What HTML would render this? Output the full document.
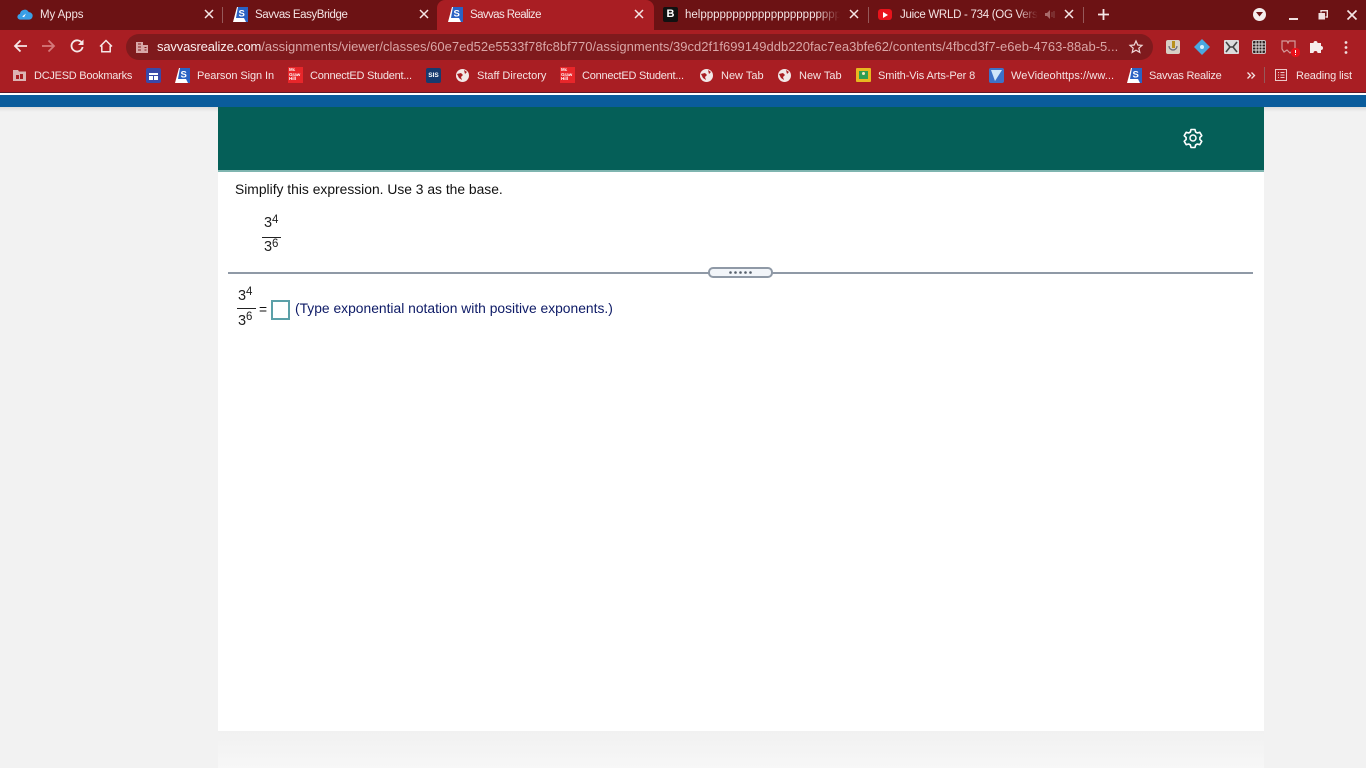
<!DOCTYPE html>
<html><head><meta charset="utf-8"><title>Savvas Realize</title>
<style>
*{box-sizing:border-box}
html,body{margin:0;padding:0;width:1366px;height:768px;overflow:hidden;background:#f2f2f2;font-family:"Liberation Sans",sans-serif}
.a{position:absolute}
.t{position:absolute;white-space:nowrap;color:#f4e4e4;font-size:11.5px;line-height:14px}
.b{position:absolute;white-space:nowrap;color:#f4e4e4;font-size:11px;line-height:14px;top:69px}
svg{position:absolute;overflow:visible}
.m{position:absolute;white-space:nowrap;color:#111;font-size:13.85px;line-height:17px}
.n{position:absolute;white-space:nowrap;color:#222;font-size:14.5px;line-height:17px}
.s{position:absolute;white-space:nowrap;color:#222;font-size:11.5px;line-height:12px}
.mh{position:absolute;width:15px;height:16px;background:#e8262a;overflow:hidden;color:#fff;font:700 4.500px/4.700px "Liberation Sans",sans-serif;padding:1px 0 0 1px}
</style></head><body>
<div class="a" style="left:0;top:0;width:1366px;height:30px;background:#6c1214"></div>
<div class="a" style="left:0;top:30px;width:1366px;height:62px;background:#a91e23"></div>
<div class="a" style="left:0;top:92px;width:1366px;height:1px;background:#5b1a2a"></div>
<div class="a" style="left:0;top:93px;width:1366px;height:2px;background:#fff"></div>
<div class="a" style="left:0;top:95px;width:1366px;height:12px;background:#0a5c9c"></div>
<div class="a" style="left:0;top:107px;width:1366px;height:5px;background:linear-gradient(#dcdcdc,#f2f2f2)"></div>
<div class="a" style="left:437px;top:0;width:217px;height:30px;background:#a91e23;border-radius:8px 8px 0 0"></div>
<div class="a" style="left:222px;top:7px;width:1px;height:16px;background:#96595a"></div>
<div class="a" style="left:868px;top:7px;width:1px;height:16px;background:#96595a"></div>
<div class="a" style="left:1083px;top:7px;width:1px;height:16px;background:#96595a"></div>

<svg style="left:17px;top:8px" width="16" height="13" viewBox="0 0 16 14"><path d="M3 12.500a3 3 0 0 1-.4-6A5 5 0 0 1 12 4.500a4 4 0 0 1 .5 8z" fill="#3a9fe6"/><path d="M5 9l4-3-2 4z" fill="#fff"/></svg>
<span class="t" style="left:40px;top:8px;letter-spacing:-.1px">My Apps</span>
<svg style="left:204px;top:9px" width="10" height="10"><path d="M1 1l8 8M9 1l-8 8" stroke="#f5e6e6" stroke-width="1.500"/></svg>

<svg style="left:233px;top:7px" width="15" height="15" viewBox="0 0 15 15"><path d="M4 0h11v15H0z" fill="#fff"/><path d="M5 0h10v15h-2L11 11H3z" fill="#2a62c4"/><text x="5.500" y="9.500" font-size="9.500" font-weight="700" fill="#fff" font-family="Liberation Sans">S</text></svg>
<span class="t" style="left:255px;top:8px;letter-spacing:-.43px">Savvas EasyBridge</span>
<svg style="left:419px;top:9px" width="10" height="10"><path d="M1 1l8 8M9 1l-8 8" stroke="#f5e6e6" stroke-width="1.500"/></svg>

<svg style="left:448px;top:7px" width="15" height="15" viewBox="0 0 15 15"><path d="M4 0h11v15H0z" fill="#fff"/><path d="M5 0h10v15h-2L11 11H3z" fill="#2a62c4"/><text x="5.500" y="9.500" font-size="9.500" font-weight="700" fill="#fff" font-family="Liberation Sans">S</text></svg>
<span class="t" style="left:470px;top:8px;letter-spacing:-.6px">Savvas Realize</span>
<svg style="left:634px;top:9px" width="10" height="10"><path d="M1 1l8 8M9 1l-8 8" stroke="#f5e6e6" stroke-width="1.500"/></svg>

<div class="a" style="left:663px;top:7px;width:15px;height:15px;background:#111;border-radius:2px;color:#fff;font:700 11px/15px 'Liberation Sans',sans-serif;text-align:center">B</div>
<span class="t" style="left:685px;top:8px;width:155px;overflow:hidden;-webkit-mask-image:linear-gradient(90deg,#000 85%,transparent)">helppppppppppppppppppppppppp</span>
<svg style="left:849px;top:9px" width="10" height="10"><path d="M1 1l8 8M9 1l-8 8" stroke="#f5e6e6" stroke-width="1.500"/></svg>

<div class="a" style="left:878px;top:9px;width:14px;height:11px;background:#e8131b;border-radius:3px"></div>
<svg style="left:883px;top:12px" width="5" height="6"><path d="M0 0l5 3-5 3z" fill="#fff"/></svg>
<span class="t" style="left:900px;top:8px;width:138px;overflow:hidden;letter-spacing:-.28px;-webkit-mask-image:linear-gradient(90deg,#000 85%,transparent)">Juice WRLD - 734 (OG Version)</span>
<svg style="left:1045px;top:9px" width="11" height="11"><path d="M0 4h2l3-3v9L2 7H0z" fill="#a86a6a"/><path d="M7 3v5M9 2v7" stroke="#8a4a4a"/></svg>
<svg style="left:1064px;top:9px" width="10" height="10"><path d="M1 1l8 8M9 1l-8 8" stroke="#f5e6e6" stroke-width="1.500"/></svg>
<svg style="left:1098px;top:9px" width="11" height="11"><path d="M5.500 0v11M0 5.500h11" stroke="#f5e6e6" stroke-width="1.800"/></svg>
<div class="a" style="left:1253px;top:8px;width:13px;height:13px;background:#f4eeee;border-radius:50%"></div>
<svg style="left:1256px;top:12px" width="7" height="5"><path d="M0 0h7L3.500 4.500z" fill="#6c1214"/></svg>
<div class="a" style="left:1289px;top:18px;width:9px;height:2px;background:#f0e0e0"></div>
<svg style="left:1318px;top:10px" width="10" height="10"><path d="M3 2.500V.7h6.300V7H7.500" fill="none" stroke="#f0e0e0" stroke-width="1.400"/><rect x="0.500" y="3" width="6.500" height="6.500" fill="#f0e0e0"/></svg>
<svg style="left:1347px;top:10px" width="10" height="10"><path d="M.5.5l9 9M9.500.5l-9 9" stroke="#f5e6e6" stroke-width="1.600"/></svg>

<svg style="left:13px;top:39px" width="15" height="14"><path d="M14 7H2M7.500 1.500L2 7l5.500 5.500" fill="none" stroke="#f6e8e8" stroke-width="1.800"/></svg>
<svg style="left:41px;top:39px" width="15" height="14"><path d="M1 7h12M7.500 1.500L13 7l-5.500 5.500" fill="none" stroke="#d5797b" stroke-width="1.800"/></svg>
<svg style="left:70px;top:39px" width="14" height="14" viewBox="0 0 14 14"><path d="M12 4.200A5.600 5.600 0 1 0 12.600 8" fill="none" stroke="#f6e8e8" stroke-width="1.800"/><path d="M13.500 .5v5.500H8z" fill="#f6e8e8"/></svg>
<svg style="left:99px;top:39px" width="14" height="14" viewBox="0 0 14 14"><path d="M1 7.500L7 1.500l6 6M2.800 6.500V12.800h8.400V6.500" fill="none" stroke="#f6e8e8" stroke-width="1.500"/></svg>

<div class="a" style="left:126px;top:34px;width:1027px;height:26px;border-radius:13px;background:#7f1a1d"></div>
<svg style="left:136px;top:41px" width="12" height="12"><path d="M0 1h7v11H0zM7 4h5v8H7z" fill="#d8a8a8"/><path d="M2 3h3M2 6h3M2 9h3M8.500 6.500h2M8.500 9h2" stroke="#7f1a1d"/></svg>
<span class="t" style="left:157px;top:39px;font-size:13px;line-height:15px;color:#d9a6a6;letter-spacing:.02px;width:962px;overflow:hidden"><span style="color:#fbeeee;letter-spacing:-.16px">savvasrealize.com</span>/assignments/viewer/classes/60e7ed52e5533f78fc8bf770/assignments/39cd2f1f699149ddb220fac7ea3bfe62/contents/4fbcd3f7-e6eb-4763-88ab-5...</span>
<svg style="left:1129px;top:40px" width="14" height="14" viewBox="0 0 14 14"><path d="M7 1l1.800 4 4.200.4-3.200 2.800 1 4.200L7 10.200 3.200 12.400l1-4.200L1 5.400l4.200-.4z" fill="none" stroke="#f0d8d8" stroke-width="1.200"/></svg>

<div class="a" style="left:1166px;top:40px;width:14px;height:14px;background:#d8cfc4;border-radius:2px"></div>
<div class="a" style="left:1172px;top:41px;width:3px;height:7px;background:#b8901c"></div>
<svg style="left:1168px;top:46px" width="10" height="6"><path d="M1 0a4 4 0 0 0 8 0" fill="none" stroke="#667" stroke-width="1.200"/></svg>
<svg style="left:1194px;top:39px" width="16" height="16"><path d="M8 0l8 8-8 8-8-8z" fill="#4aa8e0"/><circle cx="8" cy="8" r="2" fill="#d8f0fc"/></svg>
<div class="a" style="left:1224px;top:40px;width:15px;height:14px;background:#dcdcdc;border-radius:1px"></div>
<svg style="left:1226px;top:42px" width="11" height="10"><path d="M0 0l4 5-4 5M11 0L7 5l4 5M4 5h3" fill="none" stroke="#444" stroke-width="1.600"/></svg>
<div class="a" style="left:1252px;top:40px;width:14px;height:14px;background:#2a2020;border:1px solid #c8c0c0;border-radius:2px"></div>
<svg style="left:1253px;top:41px" width="12" height="12"><path d="M3 0v12M6 0v12M9 0v12M0 3h12M0 6h12M0 9h12" stroke="#e8e0e0"/></svg>
<svg style="left:1281px;top:40px" width="15" height="14"><path d="M1 1h5l1 2 1-2h6v8l-5 4-3-3-3 2-2-3z" fill="none" stroke="#d49a9a" stroke-width="1.200"/></svg>
<div class="a" style="left:1291px;top:48px;width:9px;height:9px;border-radius:4px;background:#e8101a"></div>
<div class="a" style="left:1295px;top:50px;width:1px;height:3px;background:#fff"></div>
<div class="a" style="left:1295px;top:54px;width:1px;height:1px;background:#fff"></div>
<svg style="left:1309px;top:39px" width="15" height="15" viewBox="0 0 15 15"><path d="M1 4h3.500a2 2 0 1 1 4 0H12v3a2 2 0 1 1 0 4v3H8.500a2 2 0 1 0-4 0H1z" fill="#f6ecec"/></svg>
<svg style="left:1344px;top:41px" width="4" height="13"><circle cx="2" cy="1.500" r="1.400" fill="#f0dede"/><circle cx="2" cy="6.500" r="1.400" fill="#f0dede"/><circle cx="2" cy="11.500" r="1.400" fill="#f0dede"/></svg>

<svg style="left:13px;top:70px" width="13" height="11"><path d="M0 0h5l1 1.500h7V11H0z" fill="#dcb4b4"/><path d="M3 5h3v4H3zM7 4h3v5H7z" fill="#a91e23"/></svg>
<span class="b" style="left:34px;letter-spacing:-.25px">DCJESD Bookmarks</span>
<div class="a" style="left:146px;top:68px;width:15px;height:15px;background:#3949a8;border-radius:2px"></div>
<div class="a" style="left:149px;top:73px;width:9px;height:2px;background:#fff"></div>
<div class="a" style="left:149px;top:76px;width:4px;height:4px;background:#fff"></div>
<div class="a" style="left:154px;top:76px;width:4px;height:4px;background:#fff"></div>
<svg style="left:175px;top:68px" width="15" height="15" viewBox="0 0 15 15"><path d="M4 0h11v15H0z" fill="#fff"/><path d="M5 0h10v15h-2L11 11H3z" fill="#2a62c4"/><text x="5.500" y="9.500" font-size="9.500" font-weight="700" fill="#fff" font-family="Liberation Sans">S</text></svg>
<span class="b" style="left:197px;letter-spacing:-.08px">Pearson Sign In</span>
<div class="mh" style="left:288px;top:67px">Mc<br>Graw<br>Hill</div>
<span class="b" style="left:310px;letter-spacing:-.23px">ConnectED Student...</span>
<div class="a" style="left:426px;top:68px;width:15px;height:15px;background:#173a6e;border-radius:2px;color:#fff;font:700 6.500px/15px 'Liberation Sans',sans-serif;text-align:center">SIS</div>
<div class="a" style="left:456px;top:69px;width:13px;height:13px;background:#f2e8e8;border-radius:50%"></div>
<svg style="left:456px;top:69px" width="13" height="13"><path d="M1 5l4-1 2 2-2 2 1 3-3-2zM8 1l3 2-2 2z" fill="#a91e23"/></svg>
<span class="b" style="left:477px;letter-spacing:-.01px">Staff Directory</span>
<div class="mh" style="left:560px;top:67px">Mc<br>Graw<br>Hill</div>
<span class="b" style="left:582px;letter-spacing:-.23px">ConnectED Student...</span>
<div class="a" style="left:700px;top:69px;width:13px;height:13px;background:#f2e8e8;border-radius:50%"></div>
<svg style="left:700px;top:69px" width="13" height="13"><path d="M1 5l4-1 2 2-2 2 1 3-3-2zM8 1l3 2-2 2z" fill="#a91e23"/></svg>
<span class="b" style="left:721px">New Tab</span>
<div class="a" style="left:778px;top:69px;width:13px;height:13px;background:#f2e8e8;border-radius:50%"></div>
<svg style="left:778px;top:69px" width="13" height="13"><path d="M1 5l4-1 2 2-2 2 1 3-3-2zM8 1l3 2-2 2z" fill="#a91e23"/></svg>
<span class="b" style="left:799px">New Tab</span>
<div class="a" style="left:856px;top:68px;width:15px;height:14px;background:#e8b820;border-radius:1px"></div>
<div class="a" style="left:859px;top:71px;width:9px;height:8px;background:#2f9e52"></div>
<div class="a" style="left:862px;top:72px;width:3px;height:3px;background:#f4e8c0;border-radius:50%"></div>
<span class="b" style="left:878px;letter-spacing:-.08px">Smith-Vis Arts-Per 8</span>
<div class="a" style="left:989px;top:68px;width:15px;height:15px;background:#3c72c8;border-radius:2px"></div>
<svg style="left:991px;top:70px" width="11" height="11"><path d="M0 0h11L4 11z" fill="#cfe6fa"/></svg>
<span class="b" style="left:1011px;letter-spacing:.07px">WeVideohttps://ww...</span>
<svg style="left:1127px;top:68px" width="15" height="15" viewBox="0 0 15 15"><path d="M4 0h11v15H0z" fill="#fff"/><path d="M5 0h10v15h-2L11 11H3z" fill="#2a62c4"/><text x="5.500" y="9.500" font-size="9.500" font-weight="700" fill="#fff" font-family="Liberation Sans">S</text></svg>
<span class="b" style="left:1149px;letter-spacing:-.24px">Savvas Realize</span>
<svg style="left:1247px;top:72px" width="8" height="7"><path d="M.5.500l3 3-3 3M4.500.500l3 3-3 3" fill="none" stroke="#f4e4e4" stroke-width="1.300"/></svg>
<div class="a" style="left:1264px;top:67px;width:1px;height:16px;background:#96595a"></div>
<svg style="left:1275px;top:69px" width="12" height="12"><path d="M.5.500h11v11H.5zM3 3.500h1M5.500 3.500h4M3 6h1M5.500 6h4M3 8.500h1M5.500 8.500h4" fill="none" stroke="#eccaca"/></svg>
<span class="b" style="left:1296px;letter-spacing:-.13px">Reading list</span>

<div class="a" style="left:218px;top:107px;width:1046px;height:624px;background:#fff"></div>
<div class="a" style="left:218px;top:731px;width:1046px;height:37px;background:linear-gradient(#f1f1f1,#f7f7f7)"></div>
<div class="a" style="left:218px;top:107px;width:1046px;height:63px;background:#055f58"></div>
<div class="a" style="left:218px;top:170px;width:1046px;height:2px;background:#7fb5b0"></div>
<svg style="left:1183px;top:128px" width="20" height="20" viewBox="0 0 20 20"><path d="M8 1.500h4l.6 2.500 1.700 1 2.500-.7 2 3.400-1.900 1.800v2l1.900 1.800-2 3.400-2.500-.7-1.700 1-.6 2.500H8l-.6-2.500-1.700-1-2.500.7-2-3.400 1.900-1.800v-2L1.200 7.700l2-3.400 2.500.7 1.700-1z" fill="none" stroke="#fff" stroke-width="1.600" stroke-linejoin="round"/><circle cx="10" cy="10" r="3" fill="none" stroke="#fff" stroke-width="1.500"/></svg>

<span class="m" style="left:235px;top:181px">Simplify this expression. Use 3 as the base.</span>
<span class="n" style="left:264px;top:215px">3</span><span class="s" style="left:272px;top:214px">4</span>
<div class="a" style="left:262px;top:237px;width:19px;height:1px;background:#222"></div>
<span class="n" style="left:264px;top:239px">3</span><span class="s" style="left:272px;top:238px">6</span>

<div class="a" style="left:228px;top:272px;width:1025px;height:2px;background:#8f99a6"></div>
<div class="a" style="left:708px;top:267px;width:65px;height:11px;background:#f2f5f9;border:2px solid #8f99a6;border-radius:5px"></div>
<svg style="left:729px;top:271px" width="24" height="3"><g fill="#555f6b"><circle cx="1.500" cy="1.500" r="1.300"/><circle cx="6.500" cy="1.500" r="1.300"/><circle cx="11.500" cy="1.500" r="1.300"/><circle cx="16.500" cy="1.500" r="1.300"/><circle cx="21.500" cy="1.500" r="1.300"/></g></svg>

<span class="n" style="left:238px;top:288px">3</span><span class="s" style="left:246px;top:286px">4</span>
<div class="a" style="left:237px;top:308px;width:19px;height:1px;background:#222"></div>
<span class="n" style="left:238px;top:313px">3</span><span class="s" style="left:246px;top:311px">6</span>
<span class="m" style="left:259px;top:301px">=</span>
<div class="a" style="left:271px;top:300px;width:19px;height:20px;border:2px solid #5ba0a8;background:#fff"></div>
<span class="m" style="left:295px;top:300px;color:#0d1a66">(Type exponential notation with positive exponents.)</span>
</body></html>
